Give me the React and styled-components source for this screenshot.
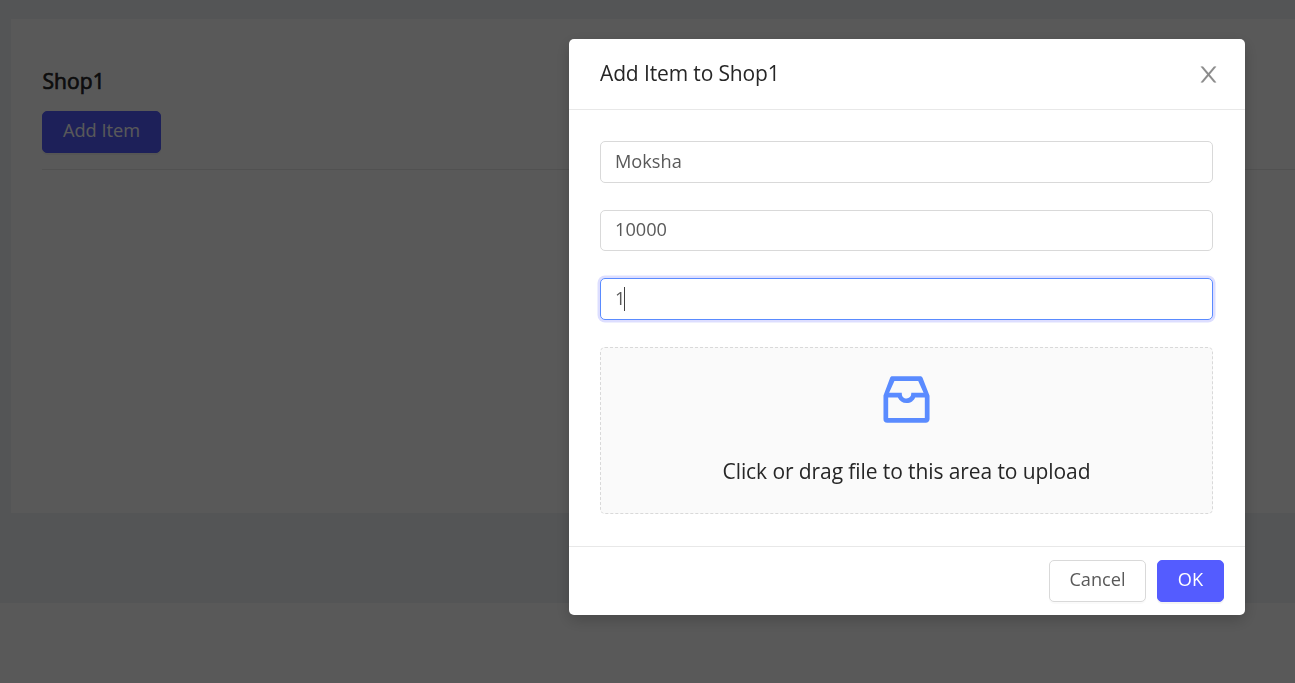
import React from "react";
import styled, { createGlobalStyle, css } from "styled-components";

const GlobalStyle = createGlobalStyle`
  *, *::before, *::after { box-sizing: border-box; }
  html, body { margin: 0; padding: 0; height: 100%; overflow: hidden; }
  body {
    font-family: "Open Sans", "Noto Sans", sans-serif;
    font-size: 18.2px;
    color: #595959;
    background: #fff;
  }
`;

const Page = styled.div`
  height: 683px;
  background: #fff;
`;

const Content = styled.main`
  height: 603px;
  padding: 19px 0 90px 11px;
  background: #f0f2f5;
`;

const Card = styled.section`
  height: 494px;
  padding: 45px 0 0 31px;
  background: #fff;
`;

const ShopName = styled.h2`
  margin: 0 0 13px;
  padding-left: 0.5px;
  font-size: 21px;
  line-height: 34px;
  font-weight: 400;
  letter-spacing: 0.1px;
  -webkit-text-stroke: 0.7px currentColor;
  color: #262626;
`;

const Divider = styled.hr`
  margin: 16px 0 0;
  border: 0;
  border-top: 1px solid #e8e8e8;
`;

const Button = styled.button`
  display: block;
  width: ${(p) => p.$width}px;
  height: 42px;
  padding: 0 0 4px;
  border: 1px solid #d9d9d9;
  border-radius: 5px;
  background: #fff;
  color: #595959;
  font: inherit;
  line-height: 36px;
  box-shadow: 0 2px 0 rgba(0, 0, 0, 0.02);
  ${(p) =>
    p.$primary &&
    css`
      border-color: #545cff;
      background: #545cff;
      color: #fff;
      box-shadow: 0 2px 0 rgba(0, 0, 0, 0.045);
    `}
`;

const Mask = styled.div`
  position: fixed;
  inset: 0;
  padding: 39px 50px 0 0;
  display: flex;
  justify-content: flex-end;
  align-items: flex-start;
  background: rgba(0, 0, 0, 0.65);
`;

const Dialog = styled.div`
  width: 676px;
  height: 576px;
  display: flex;
  flex-direction: column;
  border-radius: 5px;
  background: #fff;
  box-shadow: 0 5px 16px rgba(0, 0, 0, 0.2);
`;

const DialogHeader = styled.header`
  height: 71px;
  padding: 0 24px 0 31px;
  display: flex;
  align-items: center;
  justify-content: space-between;
  border-bottom: 1px solid #e8e8e8;
`;

const DialogTitle = styled.div`
  padding-bottom: 2px;
  font-size: 21px;
  letter-spacing: -0.13px;
  line-height: 30px;
  color: #262626;
`;

const CloseButton = styled.button`
  display: flex;
  padding: 1px 0 0;
  border: 0;
  background: none;
  color: #8c8c8c;
`;

const DialogBody = styled.div`
  flex: 1;
  padding: 31px 32px 0 31px;
`;

const Field = styled.div`
  height: ${(p) => p.$height}px;
  margin-bottom: 27px;
  padding: 0 14px;
  line-height: ${(p) => p.$height - 4}px;
  display: flex;
  align-items: flex-start;
  border: 1px solid #d9d9d9;
  border-radius: 5px;
  background: #fff;
  ${(p) =>
    p.$focused &&
    css`
      border-color: #5a8bff;
      box-shadow: 0 0 0 2.5px rgba(84, 92, 255, 0.2);
    `}
`;

const Caret = styled.span`
  width: 1px;
  height: 24px;
  margin: 8px 0 0 -1px;
  background: #404040;
`;

const UploadArea = styled.div`
  height: 167px;
  padding-top: 20px;
  display: flex;
  flex-direction: column;
  align-items: center;
  border: 1px dashed #d9d9d9;
  border-radius: 5px;
  background: #fafafa;
  color: #5a8bff;
`;

const UploadText = styled.p`
  margin: 25px 0 0;
  font-size: 21px;
  letter-spacing: -0.09px;
  line-height: 30px;
  color: #262626;
`;

const DialogFooter = styled.footer`
  height: 69px;
  padding: 13px 21px 0;
  display: flex;
  justify-content: flex-end;
  gap: 11px;
  border-top: 1px solid #e8e8e8;
`;

const CloseIcon = () => (
  <svg
    width="25"
    height="25"
    viewBox="0 0 1024 1024"
    fill="currentColor"
    stroke="currentColor"
    strokeWidth="5"
  >
    <path d="M563.8 512l262.5-312.9c4.4-5.2.7-13.1-6.1-13.1h-79.8c-4.7 0-9.2 2.1-12.3 5.7L511.6 449.8 295.1 191.7c-3-3.6-7.5-5.7-12.3-5.7H203c-6.8 0-10.5 7.9-6.1 13.1L459.4 512 196.9 824.9A7.95 7.95 0 00203 838h79.8c4.7 0 9.2-2.1 12.3-5.7l216.5-258.1 216.5 258.1c3 3.6 7.5 5.7 12.3 5.7h79.8c6.8 0 10.5-7.9 6.1-13.1L563.8 512z" />
  </svg>
);

const InboxIcon = () => (
  <svg width="63" height="63" viewBox="0 0 1024 1024" fill="currentColor">
    <path d="M885.2 446.3l-.2-.8-112.2-285.1c-5-16.1-19.9-27.2-36.8-27.2H281.2c-17 0-32.1 11.3-36.9 27.6L139.4 443l-.3.7-.2.8c-1.3 4.9-1.7 9.9-1 14.8-.1 1.6-.2 3.2-.2 4.8V830a60.9 60.9 0 0060.8 60.8h627.2c33.5 0 60.8-27.3 60.9-60.8V464.1c0-1.3 0-2.6-.1-3.7.4-4.9 0-9.6-1.3-14.1zm-295.8-43l-.3 15.7c-.8 44.9-31.8 75.1-77.1 75.1-22.1 0-41.1-7.1-54.8-20.6S436 441.2 435.6 419l-.3-15.7H229.5l86.3-193.3h386.9l86.8 193.3H589.4zm-375 76.8h157.3c24.3 57.1 76 90.8 140.4 90.8 33.7 0 65-9.4 90.3-27.2 22.2-15.6 39.5-37.4 50.7-63.6h156.5V814H214.4V480.1z" />
  </svg>
);

export default function App() {
  return (
    <>
      <GlobalStyle />
      <Page>
        <Content>
          <Card>
            <ShopName>Shop1</ShopName>
            <Button $primary $width={119}>Add Item</Button>
            <Divider />
          </Card>
        </Content>
      </Page>
      <Mask>
        <Dialog role="dialog">
          <DialogHeader>
            <DialogTitle>Add Item to Shop1</DialogTitle>
            <CloseButton aria-label="Close">
              <CloseIcon />
            </CloseButton>
          </DialogHeader>
          <DialogBody>
            <Field $height={42}>Moksha</Field>
            <Field $height={41}>10000</Field>
            <Field $height={42} $focused>
              1<Caret />
            </Field>
            <UploadArea>
              <InboxIcon />
              <UploadText>Click or drag file to this area to upload</UploadText>
            </UploadArea>
          </DialogBody>
          <DialogFooter>
            <Button $width={97}>Cancel</Button>
            <Button $primary $width={67}>OK</Button>
          </DialogFooter>
        </Dialog>
      </Mask>
    </>
  );
}
